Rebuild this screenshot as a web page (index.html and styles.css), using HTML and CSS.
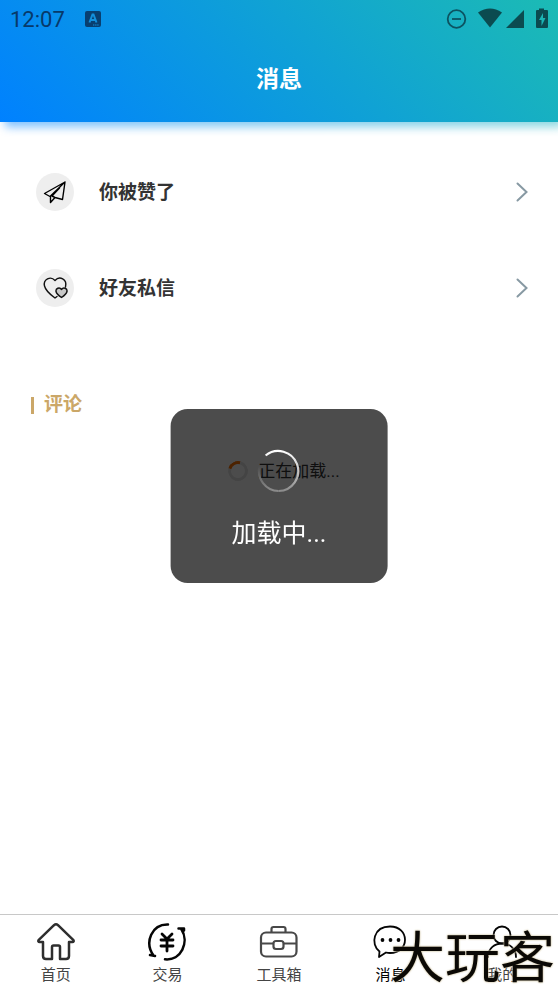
FILE: index.html
```html
<!DOCTYPE html>
<html lang="zh-CN">
<head>
<meta charset="utf-8">
<meta name="viewport" content="width=device-width, initial-scale=1">
<title>消息</title>
<link rel="stylesheet" href="styles.css">
</head>
<body>
<header class="header">
  <div class="status">
    <time class="clock">12:07</time>
    <svg class="ime" width="16" height="16" viewBox="0 0 16 16"><rect width="16" height="16" rx="2" fill="#083f70"/><path d="M4.500 11.500 7.500 3.500h1l3 8M5.500 9h5" fill="none" stroke="#1290dc" stroke-width="2"/><path d="M8 14h6" stroke="#1290dc" stroke-dasharray="1.400 .7"/></svg>
    <svg class="signals" width="104" height="22" viewBox="0 0 104 22">
      <g fill="none" stroke="#0c5361" stroke-width="1.800"><circle cx="11.500" cy="11" r="8.800"/><path d="M7 11h9"/></g>
      <g fill="#0b4b50"><path d="M33 4.500Q45-3.500 57 4.500L45 19.500Z"/><path d="M79 2v18H61Z"/><path d="M94 2V.5h5V2h3q1 0 1 1v16q0 1-1 1H92q-1 0-1-1V3q0-1 1-1Z"/></g>
      <path d="M98 5l-4 7h2.500v6l4-8H98Z" fill="#1bb5b4"/>
    </svg>
  </div>
  <h1 class="title">消息</h1>
</header>

<main class="content">
  <nav class="list">
    <a class="row" href="#likes">
      <span class="badge"><svg width="26" height="26" viewBox="0 0 26 26" fill="none" stroke="#000" stroke-width="1.400" stroke-linejoin="round" stroke-linecap="round"><path d="M23 3 2.500 14.500l5.500 3L23 3l-2.500 17.500-7.500-2L8.500 23.500V17.500M13 18.500l-3-1.500L17.500 9"/></svg></span>
      <span class="label">你被赞了</span>
      <svg class="arrow" width="12" height="20" viewBox="0 0 12 20"><path d="m1.500 1.500 9 8.500-9 8.500" fill="none" stroke="#8799a3" stroke-width="2" stroke-linecap="round"/></svg>
    </a>
    <a class="row" href="#chat">
      <span class="badge"><svg width="26" height="26" viewBox="0 0 26 26" fill="none" stroke="#111" stroke-width="1.400" stroke-linejoin="round" stroke-linecap="round"><path d="M23.500 12C25.500 4 17.500.5 13 5.500 8.500.5 1 4.500 2.500 11c1 4 7 9.500 10.500 12l2-1.500"/><path fill="#c7c7c7" d="M19.500 14.500c-2-3-6-1-5.500 2 .5 2.500 4 5 5.500 6 1.500-1 5-3.500 5.500-6 .5-3-3.500-5-5.500-2Z"/></svg></span>
      <span class="label">好友私信</span>
      <svg class="arrow" width="12" height="20" viewBox="0 0 12 20"><path d="m1.500 1.500 9 8.500-9 8.500" fill="none" stroke="#8799a3" stroke-width="2" stroke-linecap="round"/></svg>
    </a>
  </nav>
  <h2 class="section">评论</h2>
  <p class="pending"><span class="mini"></span>正在加载...</p>
</main>

<nav class="tabs">
  <a class="tab" href="#home">
    <svg width="40" height="40" viewBox="0 0 40 40" fill="none" stroke="#2e2e2e" stroke-width="2.500" stroke-linejoin="round" stroke-linecap="round"><path d="M18 3.200 2.800 17.800c-1 1.200-.3 2.200.8 2.200H7v14q0 3 3 3h6V25q0-1.500 1.500-1.500h5Q24 23.500 24 25v12h6q3 0 3-3V20h3.400c1.100 0 1.800-1 .8-2.200L22 3.200q-2-1.800-4 0Z"/></svg>
    <span>首页</span>
  </a>
  <a class="tab" href="#trade">
    <svg width="40" height="40" viewBox="0 0 40 40" fill="none" stroke="#050505" stroke-width="2.500" stroke-linecap="round" stroke-linejoin="round"><path d="M21 2.500C5 2-3 20 6.500 33.500M3 33l5 1M18 37.300C34 39 43 20 34 6.500M31.500 6.500h5.500v2"/><path stroke-width="2.800" d="m15 12 5 5 5-5M14 18h12M14 24h12M20 17v12"/></svg>
    <span>交易</span>
  </a>
  <a class="tab" href="#tools">
    <svg width="40" height="40" viewBox="0 0 40 40" fill="none" stroke="#484848" stroke-width="2.200"><rect x="2" y="10.500" width="35.500" height="24" rx="5"/><path d="M12.500 10V7q0-2 2-2h10q2 0 2 2v3M2 21.500h12.500m10 0h13"/><rect x="14.500" y="19" width="10" height="8" rx="2.500"/></svg>
    <span>工具箱</span>
  </a>
  <a class="tab current" href="#messages" aria-current="page">
    <svg width="40" height="40" viewBox="0 0 40 40" fill="none" stroke="#050505" stroke-width="1.800" stroke-linejoin="round"><path d="M8.500 29.500C-1 22 2.500 4.500 19 4.500c20 0 20 26.500 0 26.500q-2 0-4-.5L8 35Z"/><g fill="#050505" stroke="none"><circle cx="11.500" cy="18" r="1.900"/><circle cx="19.500" cy="18" r="1.900"/><circle cx="27.500" cy="18" r="1.900"/></g></svg>
    <span>消息</span>
  </a>
  <a class="tab" href="#me">
    <svg width="40" height="40" viewBox="0 0 40 40" fill="none" stroke="#050505" stroke-width="1.800" stroke-linecap="round"><circle cx="20" cy="13" r="8.500"/><path d="M6 35c0-18 28-18 28 0"/></svg>
    <span>我的</span>
  </a>
</nav>

<div class="watermark">大玩客</div>

<div class="toast" role="status">
  <svg class="spinner" width="44" height="44" viewBox="0 0 44 44" fill="none" stroke-width="2.200">
    <defs><linearGradient id="fade" x1="0" y1="0" x2="0" y2="1"><stop offset="0" stop-color="#fff"/><stop offset="1" stop-color="#8c8c8c"/></linearGradient><linearGradient id="tail" x1="0" y1="0" x2="0" y2="1"><stop offset="0" stop-color="#4d4d4d"/><stop offset="1" stop-color="#8c8c8c"/></linearGradient></defs>
    <path stroke="url(#fade)" d="M9 6.500A20 20 0 1 1 22 42"/><path stroke="url(#tail)" d="M22 42A20 20 0 0 1 3 17"/>
  </svg>
  <span>加载中...</span>
</div>
</body>
</html>
```
FILE: styles.css
```css
* {
  box-sizing: border-box;
}

body {
  margin: 0;
  min-height: 100vh;
  display: flex;
  flex-direction: column;
  overflow-x: hidden;
  background: #fff;
  color: #333;
  font-family: Roboto, "Noto Sans CJK SC", sans-serif;
}

a {
  color: inherit;
  text-decoration: none;
}

svg {
  display: block;
  flex: none;
}

.header {
  position: relative;
  z-index: 0;
  padding-bottom: 17px;
  background: linear-gradient(45deg, #0081ff, #1cbbb4);
  color: #fff;
}

.header::before {
  content: "";
  position: absolute;
  inset: 5px -5px -5px 5px;
  z-index: -1;
  background: inherit;
  filter: blur(5px);
  opacity: 0.5;
}

.header::after {
  content: "";
  position: absolute;
  inset: 0;
  z-index: -1;
  background: inherit;
}

.status {
  display: flex;
  align-items: center;
  height: 38px;
  padding: 0 9px 0 10px;
}

.clock {
  color: #07396a;
  font-size: 22px;
}

.ime {
  margin-left: 20px;
}

.signals {
  margin-left: auto;
}

.title {
  margin: 17px 0 0;
  font-size: 23px;
  line-height: 50px;
  text-align: center;
}

.content {
  flex: 1;
  padding: 22px 30px;
}

.row {
  display: flex;
  align-items: center;
  height: 96px;
  padding-left: 6px;
}

.badge {
  display: grid;
  place-items: center;
  width: 38px;
  height: 38px;
  border-radius: 50%;
  background: #eee;
}

.label {
  margin-left: 25px;
  padding-bottom: 4px;
  font-size: 19px;
  font-weight: 700;
}

.arrow {
  margin-left: auto;
}

.section {
  display: flex;
  align-items: center;
  gap: 10px;
  margin: 54px 0 0;
  color: #cba768;
  font-size: 19px;
  line-height: 30px;
}

.section::before {
  content: "";
  width: 3px;
  height: 17px;
  margin-left: 1px;
  background: currentColor;
}

.pending {
  display: flex;
  align-items: center;
  justify-content: center;
  gap: 10px;
  margin: 36px 0 0;
  padding-left: 10px;
  color: #333;
  font-size: 17px;
  line-height: 30px;
}

.mini {
  width: 20px;
  height: 20px;
  border: 3px solid #e5e5e5;
  border-top-color: #ff7300;
  border-radius: 50%;
  transform: rotate(-30deg);
}

.tabs {
  display: flex;
  height: 78px;
  padding-top: 7px;
  border-top: 1px solid #c8c8c8;
}

.tab {
  flex: 1;
  display: flex;
  flex-direction: column;
  align-items: center;
  gap: 2px;
  color: #444;
  font-size: 15px;
  line-height: 22px;
}

.current {
  color: #000;
}

.watermark {
  position: fixed;
  right: 3px;
  bottom: 6px;
  color: #0b0905;
  font-size: 55px;
  font-weight: 400;
  line-height: 55px;
  text-shadow: 0 0 2px #cfc4a5, 0 0 2px #cfc4a5;
  pointer-events: none;
}

.toast {
  position: fixed;
  top: 50%;
  left: 50%;
  display: flex;
  flex-direction: column;
  align-items: center;
  gap: 22px;
  padding: 40px 61px 30px;
  border-radius: 17px;
  background: rgba(0, 0, 0, 0.7);
  color: #fff;
  font-size: 25px;
  line-height: 38px;
  white-space: nowrap;
  transform: translate(-50%, -50%);
}
```
